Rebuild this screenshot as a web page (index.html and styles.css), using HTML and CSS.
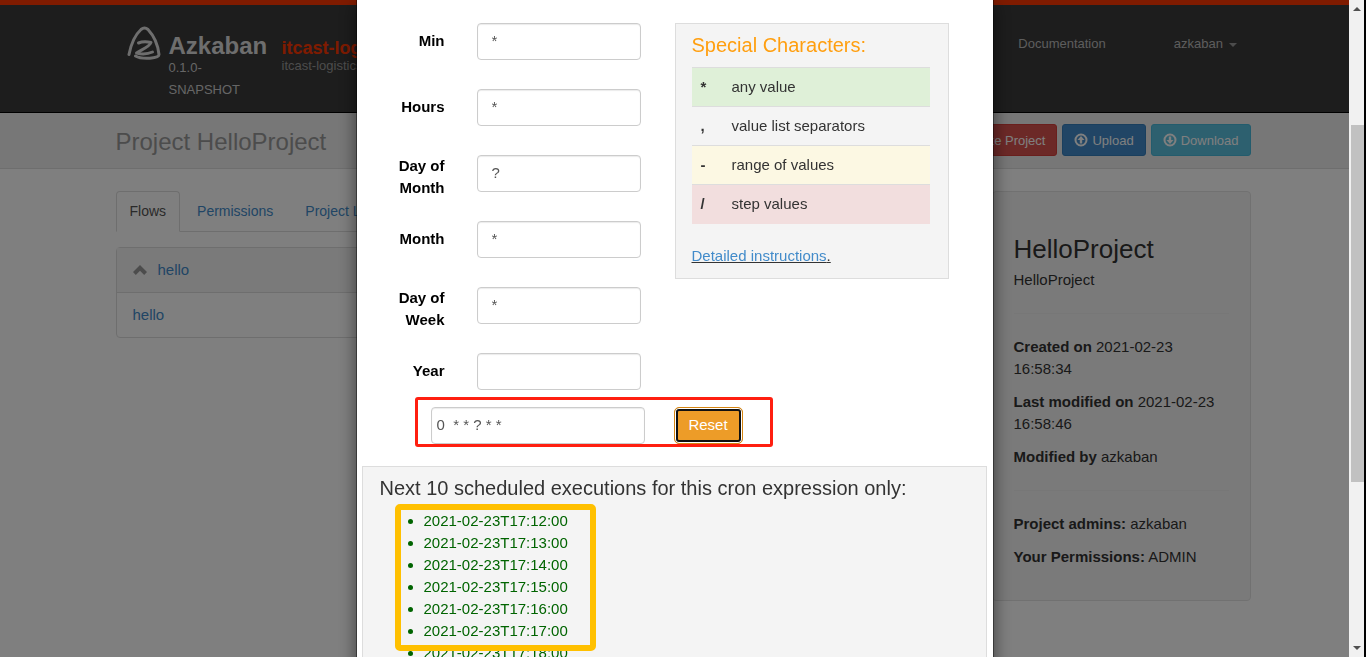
FILE: index.html
```html
<!DOCTYPE html>
<html lang="en">
<head>
<meta charset="utf-8">
<title>Azkaban - Project HelloProject</title>
<link rel="stylesheet" href="styles.css">
</head>
<body>
<div class="page">
  <header class="navbar">
    <div class="container navbar-inner">
      <a class="logo" href="#" aria-label="Azkaban home">
        <svg viewBox="0 0 34 34" width="34" height="34" fill="none" stroke="#dcdcdc" stroke-linecap="round" stroke-linejoin="round">
          <path stroke-width="3" d="M2 28.500C4 18 8 9 14 3.500Q17.500 .5 21 3.500C27 10 31 19 32 28.500C32 31 28 31.800 23 32.200C17 32.600 11 31.500 8.500 30"/>
          <path stroke-width="3" d="M11.500 17C15 15.500 20 15.500 24 16.500C23 20.500 15 23.500 9.500 27C15 28.500 21 28 25.500 26"/>
        </svg>
      </a>
      <div class="brand">
        <a class="brand-name" href="#">Azkaban</a>
        <span class="brand-version">0.1.0-SNAPSHOT</span>
      </div>
      <div class="instance">
        <strong class="instance-name">itcast-logistics</strong>
        <span class="instance-label">itcast-logistics</span>
      </div>
      <nav class="nav-links">
        <a href="#">Documentation</a>
        <a href="#">azkaban <span class="caret"></span></a>
      </nav>
    </div>
  </header>

  <div class="page-title">
    <div class="container page-title-inner">
      <h1>Project HelloProject</h1>
      <div class="actions">
        <button class="btn btn-danger" type="button">Delete Project</button>
        <button class="btn btn-primary" type="button">
          <svg viewBox="0 0 14 14" width="14" height="14"><circle cx="7" cy="7" r="5.500" fill="none" stroke="#fff" stroke-width="2"/><path fill="#fff" d="M7 3l3.500 4H8.200v3.500H5.800V7H3.500z"/></svg>
          Upload</button>
        <button class="btn btn-info" type="button">
          <svg viewBox="0 0 14 14" width="14" height="14"><circle cx="7" cy="7" r="5.500" fill="none" stroke="#fff" stroke-width="2"/><path fill="#fff" d="M7 11L3.500 7h2.300V3.500h2.400V7h2.300z"/></svg>
          Download</button>
      </div>
    </div>
  </div>

  <main class="container columns">
    <section>
      <nav class="tabs">
        <a class="tab tab-active" href="#">Flows</a>
        <a class="tab" href="#">Permissions</a>
        <a class="tab" href="#">Project Logs</a>
      </nav>
      <div class="panel">
        <div class="panel-heading">
          <svg viewBox="0 0 14 10" width="14" height="10"><path fill="#999" d="M7 0l7 7L11.200 10 7 5.800 2.800 10 0 7z"/></svg>
          <a href="#">hello</a>
        </div>
        <div class="panel-row"><a href="#">hello</a></div>
      </div>
    </section>
    <aside class="well">
      <h2>HelloProject</h2>
      <p>HelloProject</p>
      <hr>
      <p><strong>Created on</strong> 2021-02-23 16:58:34</p>
      <p><strong>Last modified on</strong> 2021-02-23 16:58:46</p>
      <p><strong>Modified by</strong> azkaban</p>
      <hr>
      <p><strong>Project admins:</strong> azkaban</p>
      <p><strong>Your Permissions:</strong> ADMIN</p>
    </aside>
  </main>
</div>

<div class="overlay">
  <div class="overlay-view">
    <div class="modal" role="dialog" aria-label="Schedule flow">
      <div class="modal-top">
        <form class="cron-form">
          <div class="fields">
            <label for="min">Min</label><input id="min" type="text" value="*">
            <label for="hours">Hours</label><input id="hours" type="text" value="*">
            <label for="dom">Day of Month</label><input id="dom" type="text" value="?">
            <label for="month">Month</label><input id="month" type="text" value="*">
            <label for="dow">Day of Week</label><input id="dow" type="text" value="*">
            <label for="year">Year</label><input id="year" type="text" value="">
          </div>
          <div class="expression">
            <input class="expression-input" type="text" aria-label="Cron expression" value="0  * * ? * *">
            <button class="reset" type="button">Reset</button>
            <span class="mark mark-red"></span>
          </div>
        </form>
        <div class="help">
          <h3>Special Characters:</h3>
          <table>
            <tr class="row-success"><th>*</th><td>any value</td></tr>
            <tr><th>,</th><td>value list separators</td></tr>
            <tr class="row-warning"><th>-</th><td>range of values</td></tr>
            <tr class="row-danger"><th>/</th><td>step values</td></tr>
          </table>
          <u><a href="#">Detailed instructions</a>.</u>
        </div>
      </div>
      <div class="next">
        <h3>Next 10 scheduled executions for this cron expression only:</h3>
        <div class="runs">
          <ul>
            <li>2021-02-23T17:12:00</li>
            <li>2021-02-23T17:13:00</li>
            <li>2021-02-23T17:14:00</li>
            <li>2021-02-23T17:15:00</li>
            <li>2021-02-23T17:16:00</li>
            <li>2021-02-23T17:17:00</li>
            <li>2021-02-23T17:18:00</li>
          </ul>
          <span class="mark mark-yellow"></span>
        </div>
      </div>
    </div>
  </div>
  <div class="scrollbar">
    <svg class="scroll-arrow" viewBox="0 0 15 17" width="15" height="17"><path fill="#505050" d="M4 11l4-4 4 4z"/></svg>
    <div class="scroll-before"></div>
    <div class="scroll-thumb"></div>
    <div class="scroll-after"></div>
    <svg class="scroll-arrow" viewBox="0 0 15 17" width="15" height="17"><path fill="#505050" d="M4 6l4 4 4-4z"/></svg>
  </div>
</div>
</body>
</html>
```
FILE: styles.css
```css
* { box-sizing: border-box; }

html, body { height: 100%; }

body {
  margin: 0;
  overflow: hidden;
  background: #fff;
  color: #333;
  font: 15px/22px "Liberation Sans", Arial, sans-serif;
}

a { color: #428bca; text-decoration: none; }
h1, h2, h3, p { margin: 0; font-weight: normal; }
input, button { font-family: inherit; font-size: 15px; }

.container { width: 100%; max-width: 1135px; margin: 0 auto; }

/* Header */
.navbar {
  min-height: 113px;
  background: #3a3a3a;
  border-top: 5px solid #ff3601;
  border-bottom: 1px solid #000;
}
.navbar-inner { display: flex; align-items: flex-start; padding: 21px 14px 0 11px; }
.logo { width: 34px; height: 34px; margin-right: 8px; }
.brand { width: 100px; margin-right: 13px; padding-top: 9px; font-size: 13px; color: #ccc; }
.brand-name { display: block; font-size: 24px; font-weight: bold; line-height: 22px; color: #ddd; }
.brand-version { display: block; }
.instance { padding-top: 12px; font-size: 13px; color: #999; }
.instance-name { display: block; font-size: 18px; line-height: 20px; color: #ff3601; }
.instance-label { display: block; line-height: 16px; }
.nav-links { display: flex; gap: 68px; margin-left: auto; padding-top: 7px; font-size: 13px; }
.nav-links a { color: #bbb; }
.caret {
  display: inline-block;
  margin-left: 2px;
  border: 4px solid transparent;
  border-top-color: #999;
  border-bottom: 0;
  vertical-align: middle;
}

/* Title bar */
.page-title { background: #eee; border-bottom: 1px solid #ddd; }
.page-title-inner { display: flex; align-items: flex-start; justify-content: space-between; height: 55px; padding-top: 11px; }
.page-title h1 { font-size: 24px; line-height: 36px; color: #999; }
.actions { display: flex; gap: 5px; }
.btn {
  display: flex;
  align-items: center;
  gap: 4px;
  height: 32px;
  padding: 0 11px;
  border: 1px solid;
  border-radius: 3px;
  color: #fff;
  font-size: 13px;
}
.btn-danger { background: #d9534f; border-color: #d43f3a; }
.btn-primary { background: #428bca; border-color: #357ebd; }
.btn-info { background: #5bc0de; border-color: #46b8da; }

/* Project content */
.columns { display: grid; grid-template-columns: 1fr 259px; gap: 33px; padding-top: 22px; align-items: start; }
.tabs { display: flex; gap: 2px; border-bottom: 1px solid #ddd; font-size: 14px; }
.tab { padding: 8px 14px; border: 1px solid transparent; }
.tab-active {
  margin-bottom: -1px;
  padding: 8px 13px;
  background: #fff;
  border-color: #ddd #ddd #fff;
  border-radius: 4px 4px 0 0;
  color: #555;
}
.panel { margin-top: 15px; border: 1px solid #ddd; border-radius: 4px; }
.panel-heading {
  display: flex;
  align-items: center;
  gap: 11px;
  height: 45px;
  padding: 0 16px;
  background: #f5f5f5;
  border-bottom: 1px solid #ddd;
}
.panel-row { padding: 11px 16px; }
.well { padding: 42px 21px 21px; background: #f5f5f5; border: 1px solid #e3e3e3; border-radius: 4px; }
.well h2 { margin-bottom: 5px; font-size: 26px; line-height: 30px; }
.well p { margin-bottom: 11px; }
.well hr { margin: 22px 0; border: 0; border-top: 1px solid #eee; }

/* Dialog layer */
.overlay {
  position: fixed;
  inset: 0;
  display: flex;
  overflow: hidden;
  background: rgba(0, 0, 0, .5);
  border-right: 2px solid #000;
}
.overlay-view { flex: 1; display: flex; justify-content: center; align-items: flex-start; }
.modal {
  width: 100%;
  max-width: 638px;
  padding: 23px 6px 16px 5px;
  background: #fff;
  border: 1px solid rgba(0, 0, 0, .4);
  border-top: 0;
  background-clip: padding-box;
  box-shadow: 0 5px 16px rgba(0, 0, 0, .5);
}
.modal-top { display: flex; align-items: flex-start; padding: 0 38px 0 27px; }
.cron-form { flex: 1; min-width: 0; }
.fields { display: grid; grid-template-columns: 56px 164px; grid-auto-rows: 37px; gap: 29px 32px; }
.fields label {
  display: flex;
  align-items: center;
  align-self: start;
  justify-content: flex-end;
  min-height: 35px;
  text-align: right;
  font-weight: bold;
  color: #000;
}
.cron-form input {
  width: 100%;
  height: 37px;
  padding: 0 14px 2px;
  border: 1px solid #ccc;
  border-radius: 4px;
  box-shadow: inset 0 1px 1px rgba(0, 0, 0, .08);
  background: #fff;
  color: #555;
}
.expression { position: relative; display: flex; align-items: center; gap: 29px; margin: 17px 0 0 42px; }
.expression .expression-input { width: 214px; flex: none; padding: 0 5px 2px; white-space: pre; }
.reset {
  flex: none;
  width: 69px;
  height: 37px;
  padding-bottom: 3px;
  border: 1px solid #d58512;
  border-radius: 5px;
  background: #ed9c28;
  box-shadow: inset 0 0 0 1px #fff, inset 0 0 0 3px #101010;
  color: #fff;
}

.mark { position: absolute; pointer-events: none; }
.mark-red { left: -16px; top: -10px; width: 358px; height: 50px; border: 3px solid #ff1f10; border-radius: 3px; }
.mark-yellow { left: 15px; top: 5px; width: 201px; height: 147px; border: 6px solid #ffc000; border-radius: 5px; }

.help { flex: none; width: 274px; padding: 10px 18px 11px 16px; background: #f4f4f4; border: 1px solid #ddd; }
.help h3 { margin-bottom: 11px; font-size: 20px; line-height: 22px; color: #ff9f10; }
.help table { width: 100%; margin-bottom: 21px; border-collapse: collapse; }
.help th, .help td { height: 39px; padding: 0 9px; border-top: 1px solid #ddd; text-align: left; }
.help th { width: 31px; }
.row-success { background: #dff0d8; }
.row-warning { background: #fcf8e3; }
.row-danger { background: #f2dede; }

.next { margin-top: 22px; padding: 10px 17px; background: #f4f4f4; border: 1px solid #ddd; }
.next h3 { font-size: 20px; line-height: 22px; }
.runs { position: relative; padding-top: 11px; }
.runs ul { margin: 0; padding-left: 44px; color: #006400; }

/* Dialog scrollbar */
.scrollbar { flex: none; display: flex; flex-direction: column; width: 15px; padding-left: 2px; background: #f1f1f1; }
.scroll-arrow { flex: none; margin-left: -2px; }
.scroll-before { flex: 108; }
.scroll-thumb { flex: 357; background: #c1c1c1; }
.scroll-after { flex: 158; }
```
